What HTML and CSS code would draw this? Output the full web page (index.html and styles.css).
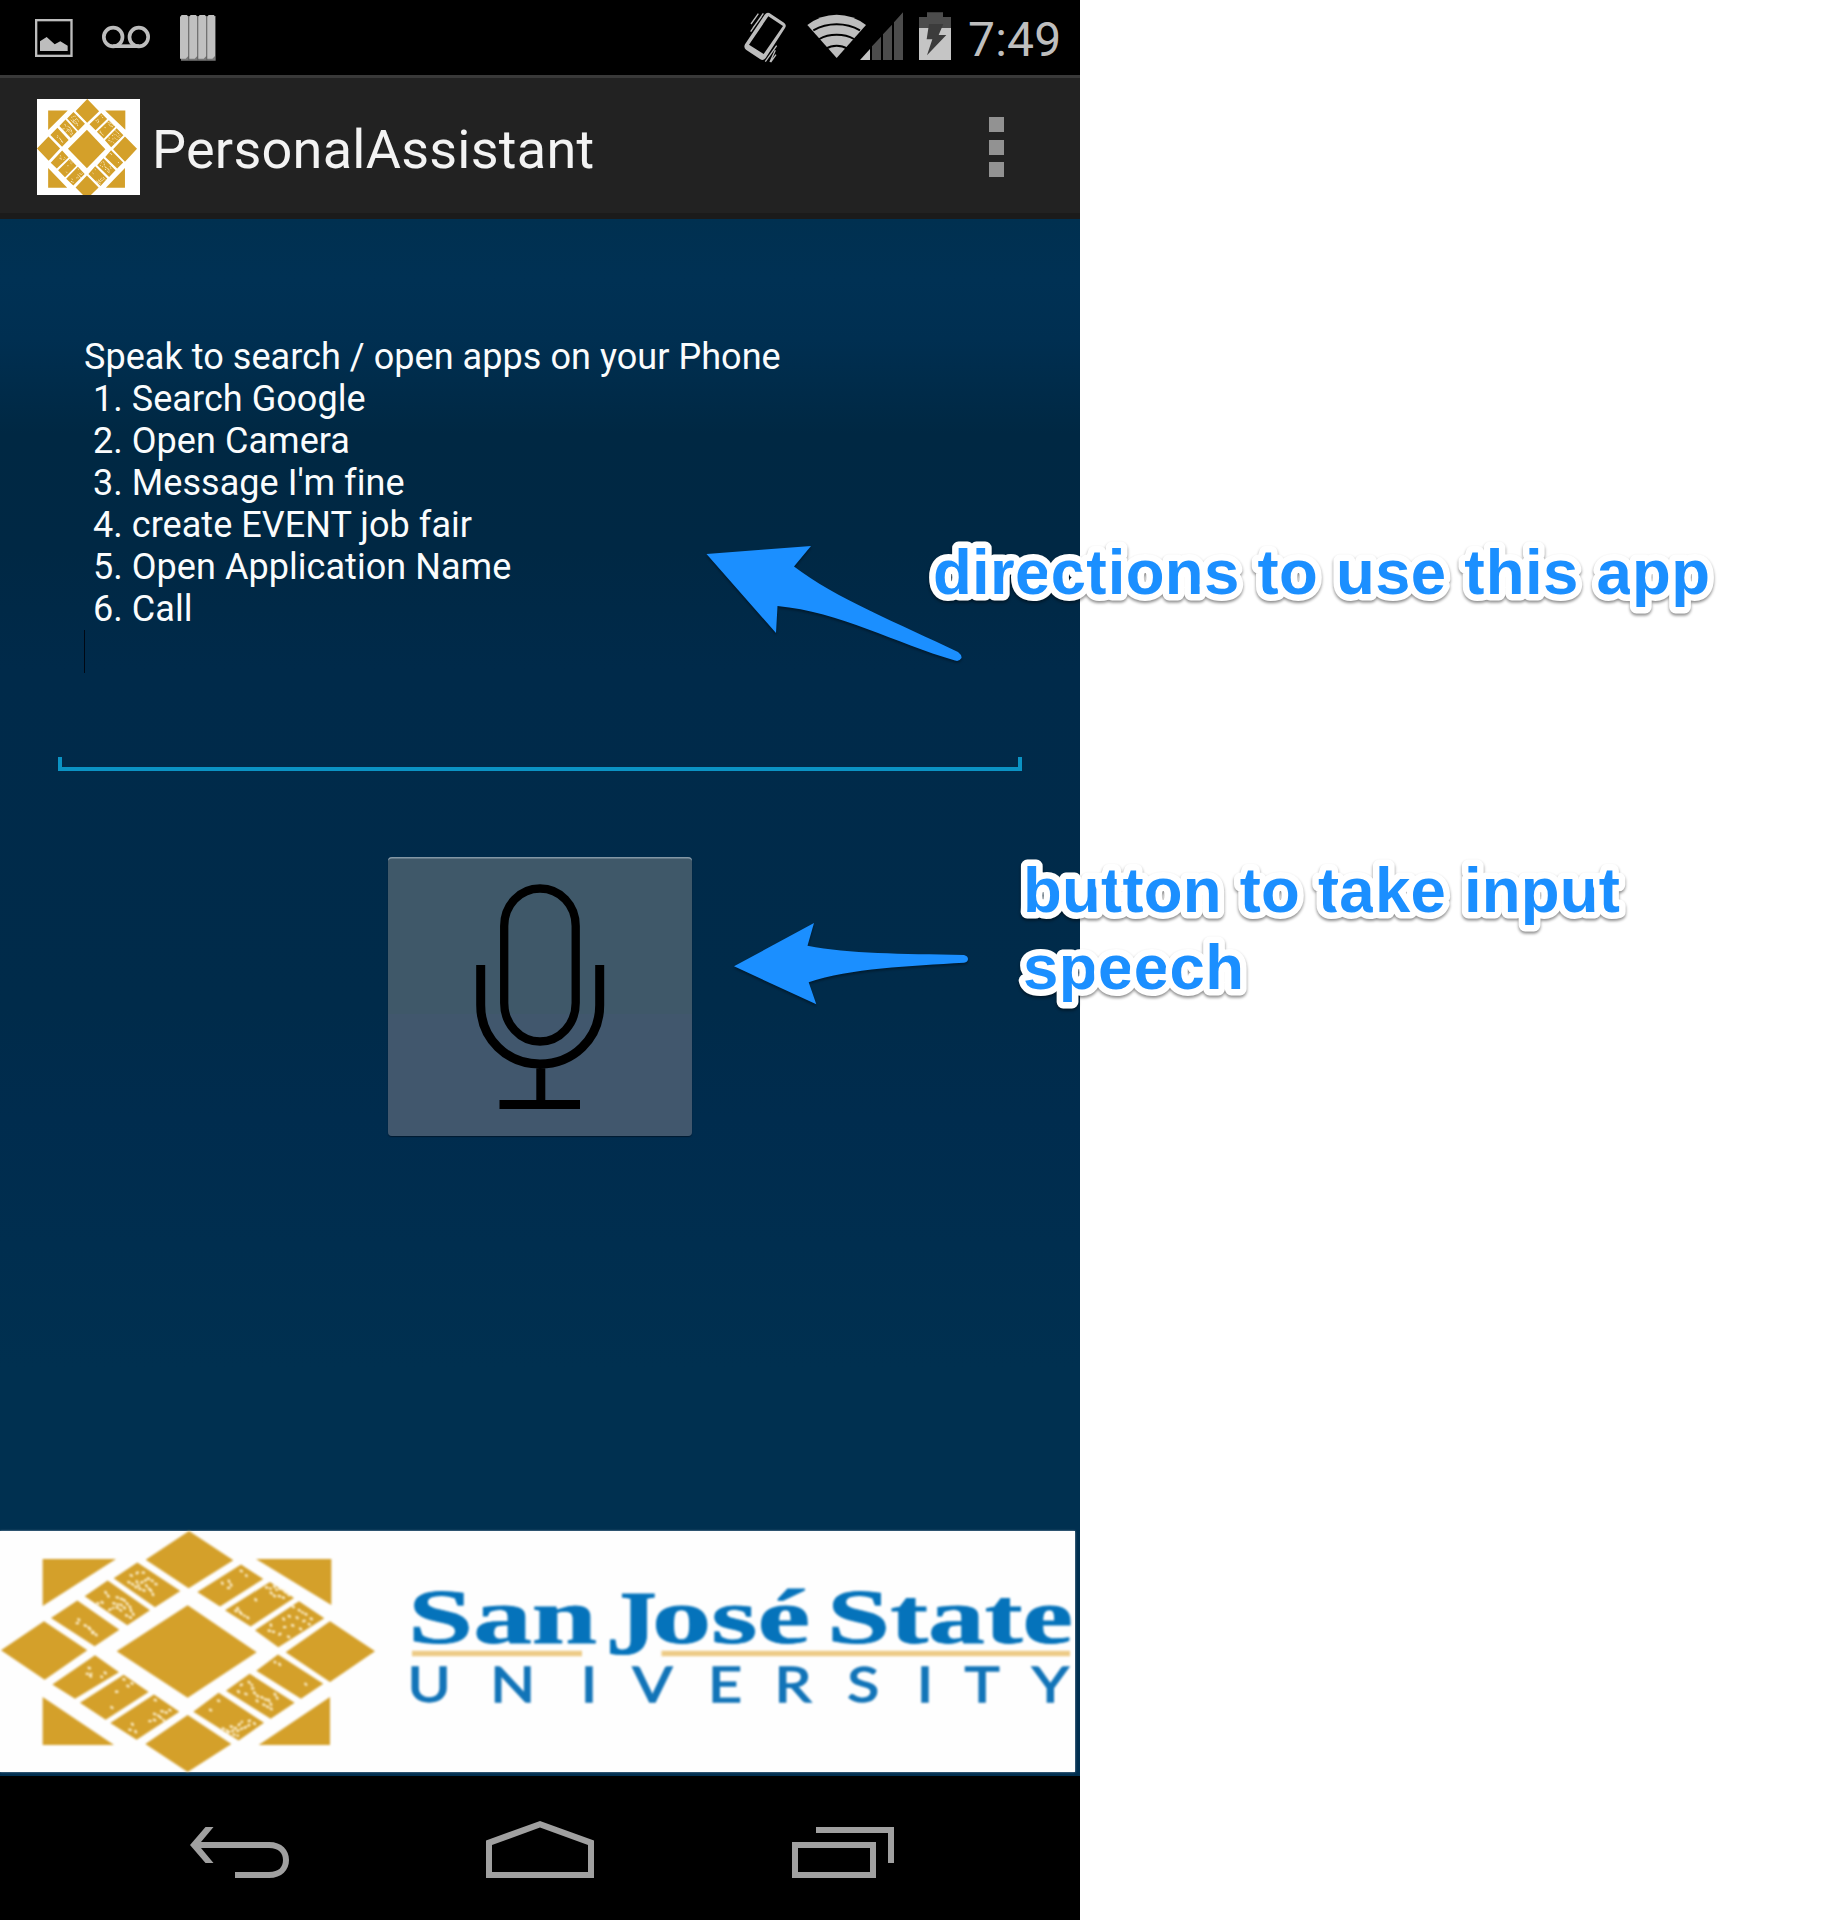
FILE: index.html
```html
<!DOCTYPE html>
<html lang="en">
<head>
<meta charset="utf-8">
<title>PersonalAssistant</title>
<link rel="stylesheet" href="styles.css">
</head>
<body>
<svg class="defs" aria-hidden="true">
  <symbol id="emblem" viewBox="3 63 1122 724" preserveAspectRatio="none">
    <g class="gold">
      <path d="M128 147H348L128 288ZM768 147H994V285ZM128 562L342 706H128ZM990 562V706H776Z"/>
      <path d="M567 63L700 151L566 235L437 149ZM132 334L262 421L134 510L3 421ZM990 334L1125 424L990 517L857 427ZM563 616L694 703L563 787L436 703Z"/>
      <path d="M563 286L770 427L563 564L350 424Z"/>
      <path d="M412 158L541 243L465 292L341 205ZM323 212L450 301L382 346L254 259ZM232 272L358 360L284 409L153 324Z"/>
      <path d="M723 164L790 207L660 290L592 246ZM810 216L882 264L752 350L675 301ZM897 274L973 325L835 412L765 361Z"/>
      <path d="M285 436L357 487L225 567L157 524ZM371 495L446 547L317 630L240 579ZM462 554L538 606L410 690L331 640Z"/>
      <path d="M834 434L970 522L903 567L769 483ZM749 492L884 579L812 627L678 543ZM656 549L792 639L716 692L580 606Z"/>
    </g>
    <g class="speckle">
      <path d="M392 196l10 4M410 190l8 -6M428 188l12 0M385 216l14 8M410 214l6 14M424 218l14 -8M444 205l14 8M418 236l20 8M438 226l12 14M452 240l8 16M466 222l12 4M406 230l4 4"/>
      <path d="M316 246l10 14M350 262l22 8M372 270l20 24M350 292l16 12M328 300l12 -6M378 316l20 10M392 300l12 20M292 280l8 2M340 280l14 4M362 284l14 12M305 276l4 4"/>
      <path d="M235 328l6 6M254 346l14 8M268 356l20 18M276 368l14 8M230 340l5 0"/>
      <path d="M722 182l8 4M686 212l10 18M684 234l8 0M666 218l2 4M738 196l2 2"/>
      <path d="M798 232l14 4M822 228l8 12M838 236l14 6M812 248l14 12M836 258l16 6M855 246l12 10M712 294l8 12M722 310l12 8M742 322l4 4M766 268l3 4M706 302l6 4"/>
      <path d="M878 290l8 4M896 300l12 8M916 312l8 4M890 322l8 8M910 334l12 -4M932 326l8 4M866 318l8 4M850 326l4 6M876 346l10 4M900 356l6 4M812 344l4 10M806 362l16 4M838 374l8 -6M864 380l8 4M852 352l4 0M926 342l3 2"/>
      <path d="M266 474l10 4M260 492l14 0M270 498l6 4M314 488l8 6M304 500l2 2"/>
      <path d="M370 508l10 4M394 520l10 6M348 546l6 0M334 592l5 4M382 528l4 2"/>
      <path d="M464 570l6 3M484 604l20 6M508 600l10 6M462 612l14 6M480 622l12 10M462 630l8 4M396 642l8 10M388 660l12 2M406 664l4 8M448 634l6 0"/>
      <path d="M838 462l4 6M824 456l2 2M916 522l3 3"/>
      <path d="M722 526l10 -4M746 516l10 10M714 544l8 8M736 552l10 4M762 548l12 12M784 562l18 10M806 570l8 16M790 584l14 8M824 552l8 14M770 572l8 8M812 596l6 4M756 536l6 0"/>
      <path d="M654 572l8 4M630 600l4 2M668 656l16 8M692 650l16 6M684 668l18 -6M712 664l14 -8M734 654l14 -8M746 634l12 -4M716 646l10 -10M700 674l14 4M762 640l6 6"/>
    </g>
  </symbol>
</svg>

<main class="stage">
  <section class="phone">
    <header class="status-bar">
      <div class="status-left">
        <svg width="38" height="75" viewBox="105 0 114 225"><rect x="108.500" y="60.500" width="106" height="107" fill="none" stroke="#bdbdbd" stroke-width="7"/><path d="M120 153V124L140 111L164 133L181 124L203 137V153Z" fill="#bdbdbd"/></svg>
        <svg width="51" height="75" viewBox="303 0 153 225" fill="none" stroke="#bdbdbd" stroke-width="11"><circle cx="339.500" cy="111" r="28"/><circle cx="416.500" cy="111" r="28"/><path d="M339 138.500H417"/></svg>
        <svg width="36" height="75" viewBox="540 0 108 225"><path d="M543 48H647V182H543Z" fill="#777"/><path d="M540 51l5-6h16l4 6v117l-8 8h-17zM567 51l5-6h16l4 6v117l-8 8h-17zM594 51l5-6h16l4 6v117l-8 8h-17zM621 51l5-6h16l3 6v117l-8 8h-16z" fill="#c0c0c0"/><path d="M566.500 48V182M593.500 48V182M620.500 48V182" stroke="#505050" stroke-width="2"/></svg>
      </div>
      <div class="status-right">
        <svg width="44" height="75" viewBox="69 0 132 225" class="vibrate">
          <path fill="#bdbdbd" fill-rule="evenodd" d="M148 39L192 68Q201 75 195 84L137 174Q130 183 121 178L78 149Q70 142 75 133L134 44Q140 36 148 39ZM145 49L87 134L131 162L189 78Z"/>
          <path fill="none" stroke="#bdbdbd" stroke-width="4" d="M115 41L93 72M130 40L92 95M170 137L136 185M166 151L150 186M168 164L152 186M124 50L99 84"/>
        </svg>
        <svg class="wifi" width="97" height="75" viewBox="261 0 291 225">
          <path fill="#bdbdbd" d="M350 174L262 75Q302 44 350 44T438 75Z"/>
          <path fill="none" stroke="#000" stroke-width="6" d="M280 91Q312 73 350 73T420 91M298 117Q320 104 350 104T402 117M318 146Q332 137 350 137T382 146"/>
          <path fill="#4c4c4c" d="M456 139L483 110V180H456ZM489 103L516 74V180H489ZM522 67L549 37V180H522Z"/>
          <path fill="#c5c5c5" d="M420 180L450 147V180Z"/>
        </svg>
        <svg class="battery" width="32" height="75" viewBox="597 0 96 225">
          <path fill="#4c4c4c" d="M597 51H621V37H669V51H693V85H597Z"/><path fill="#c5c5c5" d="M597 84H693V180H597Z"/>
          <path fill="#3c3c3c" d="M627 72H670L656 105H679L621 166L637 118H620Z"/>
        </svg>
        <span class="clock">7:49</span>
      </div>
    </header>

    <header class="action-bar">
      <div class="app-icon"><svg width="100" height="100"><use href="#emblem" width="100" height="100"/></svg></div>
      <h1 class="app-title">PersonalAssistant</h1>
      <div class="overflow"><i></i><i></i><i></i></div>
    </header>

    <section class="content">
      <div class="directions">
        <p>Speak to search / open apps on your Phone</p>
        <p> 1. Search Google</p>
        <p> 2. Open Camera</p>
        <p> 3. Message I'm fine</p>
        <p> 4. create EVENT job fair</p>
        <p> 5. Open Application Name</p>
        <p> 6. Call</p>
        <div class="caret"></div>
      </div>
      <button class="mic" aria-label="Speak">
        <svg width="304" height="279" viewBox="388 857 304 279" fill="none" stroke="#000">
          <path stroke-width="8.300" d="M504.200 926C504.200 905 520 888.500 540 888.500S575.700 905 575.700 926V1003C575.700 1024 560 1041.500 540 1041.500S504.200 1024 504.200 1003Z"/>
          <path stroke-width="9" d="M480.700 965V1005C480.700 1039 507 1064 540 1064S599.700 1039 599.700 1005V965M540.800 1064V1102M499.500 1104.500H580"/>
        </svg>
      </button>
      <div class="banner">
        <svg width="1075" height="241" viewBox="0 1531 1075 241">
          <use href="#emblem" x="1" y="1531" width="374" height="241"/>
          <g class="school">
            <text x="408" y="1643" textLength="189" lengthAdjust="spacingAndGlyphs">San</text>
            <text class="initial" x="606" y="1654" textLength="51" lengthAdjust="spacingAndGlyphs">J</text>
            <text x="652" y="1643" textLength="158" lengthAdjust="spacingAndGlyphs">osé</text>
            <text x="827" y="1643" textLength="246" lengthAdjust="spacingAndGlyphs">State</text>
          </g>
          <path d="M412 1653.500H582M661.500 1653.500H1070" stroke="#edcb86" stroke-width="5.500"/>
          <g class="university" transform="translate(0 1702) scale(1.2 1)"><text y="0" x="339.500 408.500 484 527 590 645.500 706 764 804 860">UNIVERSITY</text></g>
        </svg>
      </div>
    </section>

    <nav class="nav-bar">
      <svg width="100" height="144" viewBox="190 1776 100 144"><path fill="#a0a0a0" d="M190 1845L205.500 1827H213.500L201 1842H269C282 1842 289 1850 289 1860S282 1878 269 1878H235V1872H269C279 1872 283 1867 283 1860S279 1848 269 1848H201L213.500 1863H205.500Z"/></svg>
      <svg class="home" width="108" height="144" viewBox="486 1776 108 144"><path fill="#a0a0a0" fill-rule="evenodd" d="M486 1840.500L540 1821L594 1840.500V1878H486ZM492 1845V1872H588V1845L540 1827.500Z"/></svg>
      <svg width="102" height="144" viewBox="792 1776 102 144"><path fill="#a0a0a0" fill-rule="evenodd" d="M816 1827H894V1863H888V1833H816ZM792 1842H876V1878H792ZM798 1848V1872H870V1848Z"/></svg>
    </nav>
  </section>

  <svg class="arrow arrow-directions" width="262" height="125" viewBox="704 542 262 125"><path d="M706.500 554L811 546L794 566.500C835 598 900 624 958 652Q962 655 961.500 658Q959 662 955 660.500C895 643 840 612 777.500 606L776 633Z"/></svg>
  <svg class="arrow arrow-button" width="242" height="90" viewBox="731 920 242 90"><path d="M734 966.300L814 923L807.500 945.700C850 954 900 953.500 964 955Q968 956 968 959Q968 962 964 962.700C910 966 850 968 808.700 982.300L816.300 1004.300Z"/></svg>
  <svg class="note note-directions" width="800" height="100"><text x="12" y="60" textLength="777">directions to use this app</text></svg>
  <svg class="note note-button" width="640" height="180"><text x="12" y="60" textLength="597">button to take input</text><text x="12" y="137" textLength="221">speech</text></svg>
</main>
</body>
</html>
```
FILE: styles.css
```css
* { box-sizing: border-box; }
body { margin: 0; background: #fff; font-family: Roboto, sans-serif; }
h1, p { margin: 0; font-weight: 400; }
svg { display: block; flex: none; }
.defs { position: absolute; width: 0; height: 0; }
.gold { fill: #d4a02a; }
.speckle { fill: none; stroke: #fff3d4; stroke-width: 7; stroke-linecap: round; stroke-dasharray: 4 9; }

.stage { position: relative; width: 1826px; height: 1920px; overflow: hidden; }
.phone { width: 1080px; height: 1920px; display: flex; flex-direction: column; background: #000; }

.status-bar { height: 75px; display: flex; justify-content: space-between; padding: 0 19px 0 35px; background: #000; }
.status-left { display: flex; gap: 28px; }
.status-right { display: flex; }
.vibrate { margin-right: 20px; }
.wifi { margin-right: 15px; }
.battery { margin-right: 17px; }
.clock { font-size: 48px; line-height: 56px; padding-top: 12px; color: #bebebe; width: 93px; white-space: nowrap; letter-spacing: .2px; }

.action-bar { height: 144px; display: flex; align-items: flex-start; background: #222; border-top: 3px solid #393939; border-bottom: 6px solid #1b1b1b; padding: 21px 76px 0 37px; }
.app-icon { width: 103px; height: 96px; background: #fff; overflow: hidden; }
.app-title { margin-left: 12px; font-size: 54px; line-height: 64px; padding-top: 19px; color: #f3f3f3; letter-spacing: .25px; }
.overflow { margin-left: auto; padding-top: 18px; display: flex; flex-direction: column; gap: 7.5px; }
.overflow i { width: 15px; height: 15px; background: #929292; }

.content { height: 1557px; display: flex; flex-direction: column; align-items: center; background: linear-gradient(#003050 0, #003154 60px, #002f51 120px, #002843 215px, #002844 330px, #002a4a 450px, #002b4a 790px, #002c4e 900px, #003050 1150px, #003050 1330px, #002f50 100%); }
.directions { width: 964px; height: 552px; padding: 117px 26px 0; color: #fafcfd; font-size: 36px; line-height: 42px; letter-spacing: .05px; background: linear-gradient(#0b93c4, #0b93c4) left bottom / 100% 4px no-repeat, linear-gradient(#0b93c4, #0b93c4) left bottom / 4px 14px no-repeat, linear-gradient(#0b93c4, #0b93c4) right bottom / 4px 14px no-repeat; }
.directions p { white-space: pre; }
.caret { width: 1px; height: 43px; background: #000814; }
.mic { margin-top: 86px; width: 304px; height: 279px; padding: 0; border: 0; border-radius: 4px; background: linear-gradient(#3f5869 0 157px, #41576d 157px); box-shadow: inset 0 2px 0 -0.5px #8397a5, 0 1px 1px #001a30; }
.banner { margin-top: 395px; width: 1075px; height: 241px; margin-right: auto; background: #fefefe; box-shadow: 0 0 2px #8ba3b5; }
.banner svg { filter: blur(.8px); }
.school { font-family: "Liberation Serif", "Times New Roman", serif; font-weight: 700; font-size: 78px; fill: #0573bb; stroke: #0573bb; stroke-width: .8px; }
.initial { font-size: 92px; }
.university { font-family: Lato, sans-serif; font-size: 49px; fill: #1274b8; stroke: #1274b8; stroke-width: 1.4px; }

.nav-bar { height: 144px; display: flex; gap: 196px; padding-left: 190px; background: #000; }
.home { margin-right: 2px; }

.arrow { position: absolute; fill: #1b8fff; filter: drop-shadow(0 2px 1px rgba(0, 0, 0, .35)); }
.arrow-directions { left: 704px; top: 542px; }
.arrow-button { left: 731px; top: 920px; }
.note { position: absolute; overflow: visible; font: 700 63.5px "Liberation Sans", Arial, sans-serif; fill: #1b8fff; stroke: #fff; stroke-width: 13px; stroke-linejoin: round; paint-order: stroke fill; filter: drop-shadow(0 2px 1.5px rgba(0, 0, 0, .45)); }
.note-directions { left: 921px; top: 534px; }
.note-button { left: 1011px; top: 852px; }
```
